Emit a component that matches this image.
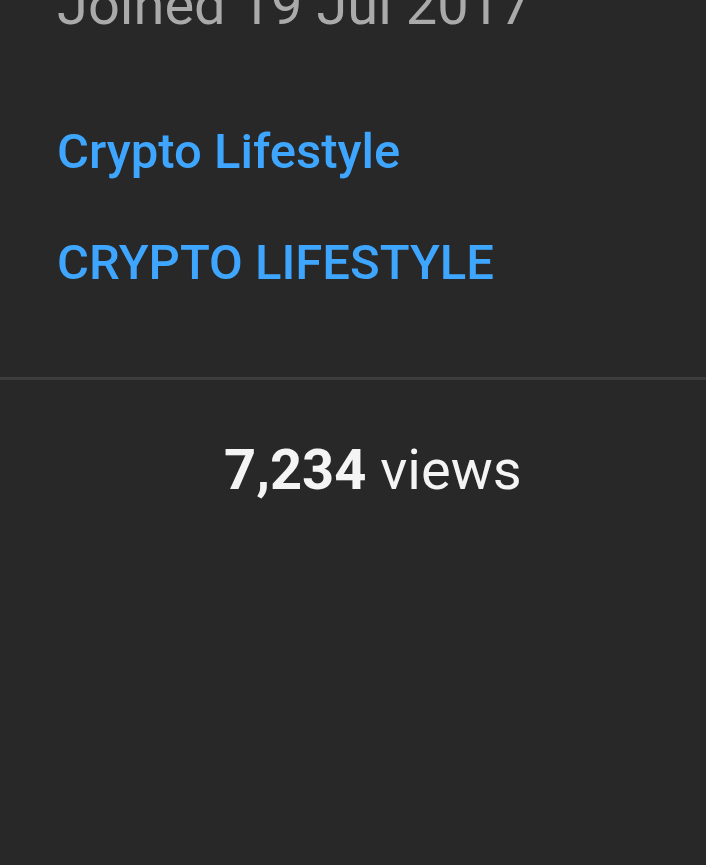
export default function App() {
  return (
    <div className="min-h-[865px] w-full bg-[#282828] overflow-hidden" style={{ fontFamily: "Roboto, 'Noto Sans', sans-serif" }}>
      <div className="pl-[57px] pb-[86px]">
        <div className="mt-[-27px] text-[56px] leading-[64px] text-[#aaaaaa]">Joined 19 Jul 2017</div>
        <div className="mt-[87px] text-[49px] leading-[56px] font-medium text-[#3ea6ff]">Crypto Lifestyle</div>
        <div className="mt-[55px] text-[49px] leading-[56px] font-medium text-[#3ea6ff]">CRYPTO LIFESTYLE</div>
      </div>
      <div className="h-[3px] bg-[#3d3d3d]" />
      <div className="pt-[58px] pl-[224px] text-[56px] leading-[64px] text-[#f4f4f4]">
        <span className="font-bold">7,234</span> views
      </div>
    </div>
  );
}
